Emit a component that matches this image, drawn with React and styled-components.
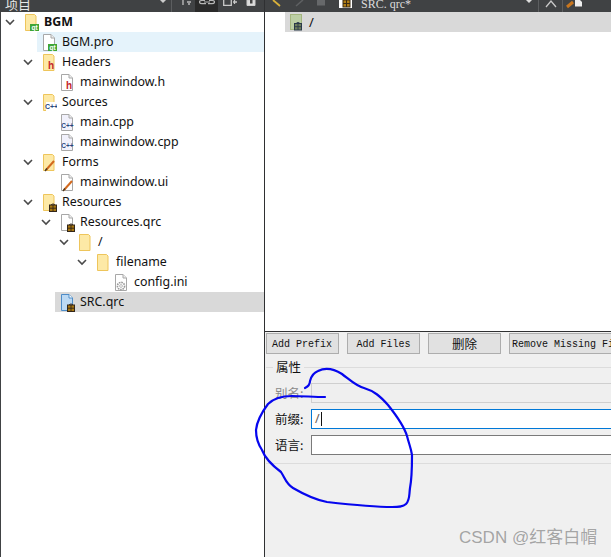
import React from "react";
import styled, { createGlobalStyle } from "styled-components";

const Global = createGlobalStyle`
  html, body { margin: 0; padding: 0; background: #f0f0f0; }
  body { font-family: "Noto Sans", "Noto Sans CJK SC", sans-serif; }
  #root { width: 611px; height: 557px; overflow: hidden; }
`;

const Page = styled.div`
  position: relative;
  width: 611px;
  height: 557px;
  overflow: hidden;
  display: flex;
  flex-direction: column;
`;

const TopBar = styled.div`
  height: 12px;
  flex: none;
  display: flex;
  align-items: flex-end;
  background: #404244;
  overflow: hidden;
  color: #e6e6e6;
`;

const TopText = styled.span`
  font: 13px/16px "Noto Sans CJK SC", sans-serif;
  margin-left: 5px;
  white-space: nowrap;
  flex: none;
`;

const TabTitle = styled.span`
  font: 12px/16px "Liberation Serif", serif;
  color: #dcdcdc;
  margin-left: 9px;
  white-space: nowrap;
  flex: none;
`;

const TopRight = styled.div`
  margin-left: auto;
  padding-right: 29px;
  display: flex;
  flex: none;
`;

const TopSlot = styled.div`
  width: ${(p) => p.$w}px;
  margin-left: ${(p) => p.$left || 0}px;
  height: 12px;
  flex: none;
  background: ${(p) => p.$bg || "transparent"};
  display: flex;
  justify-content: center;
`;

const Main = styled.div`
  flex: 1;
  display: flex;
  min-height: 0;
`;

const Sidebar = styled.div`
  width: 263px;
  flex: none;
  background: #fff;
  border-left: 1px solid #404244;
  border-right: 1px solid #2f3032;
  display: flex;
  flex-direction: column;
`;

const Row = styled.div`
  height: 20px;
  display: flex;
  align-items: center;
  padding-left: ${(p) => p.$depth * 18}px;
  margin-left: -1px;
  font-size: 12.4px;
  color: #111;
  font-weight: ${(p) => (p.$bold ? 700 : 400)};
`;

const Chevron = styled.div`
  width: 20px;
  flex: none;
  height: 20px;
  display: flex;
  align-items: center;
  padding-left: 5px;
  box-sizing: border-box;
`;

const RowBody = styled.div`
  flex: 1;
  height: 20px;
  display: flex;
  align-items: center;
  gap: 7px;
  margin-left: -1px;
  padding-left: 5px;
  background: ${(p) => p.$bg || "transparent"};
`;

const RowLabel = styled.span`
  padding-bottom: 2px;
`;

const Right = styled.div`
  flex: 1;
  min-width: 0;
  display: flex;
  flex-direction: column;
`;

const ResourcePane = styled.div`
  height: 319px;
  flex: none;
  background: #fff;
  border-bottom: 1px solid #2f3032;
  padding-left: 20px;
`;

const PrefixRow = styled.div`
  height: 20px;
  background: #d9d9d9;
  display: flex;
  align-items: center;
  padding-left: 5px;
  gap: 6px;
  font: 13px "Noto Sans", sans-serif;
  color: #111;
`;

const Editor = styled.div`
  flex: 1;
  background: #f0f0f0;
  padding: 1px 0 0 1px;
  overflow: hidden;
`;

const ButtonRow = styled.div`
  display: flex;
  gap: 8px;
  height: 21px;
  width: 400px;
`;

const ActionButton = styled.div`
  width: ${(p) => p.$w || 73}px;
  height: 21px;
  flex: none;
  box-sizing: border-box;
  background: #e1e1e1;
  border: 1px solid #adadad;
  display: flex;
  align-items: center;
  padding-top: 2px;
  padding-left: ${(p) => p.$pad ?? 0}px;
  justify-content: ${(p) => (p.$pad != null ? "flex-start" : "center")};
  font: 10px/17px "Liberation Mono", "Noto Sans CJK SC", monospace;
  color: #111;
  white-space: nowrap;
  overflow: hidden;
`;

const CjkButton = styled(ActionButton)`
  padding-top: 0;
  font: 12.5px/19px "Noto Sans CJK SC", sans-serif;
`;

const Group = styled.div`
  margin-top: 4px;
  border-bottom: 1px solid #dcdcdc;
  padding-bottom: 8px;
`;

const GroupTitle = styled.div`
  height: 18px;
  display: flex;
  align-items: center;
  gap: 3px;
  font: 12.5px/18px "Noto Sans CJK SC", sans-serif;
  color: #111;
  &::before { content: ""; width: 7px; height: 1px; background: #dcdcdc; }
  &::after { content: ""; flex: 1; height: 1px; background: #dcdcdc; }
`;

const Form = styled.div`
  display: grid;
  grid-template-columns: 36px 320px;
  grid-auto-rows: 20px;
  row-gap: 6px;
  padding: 7px 0 0 9px;
  align-items: center;
`;

const Label = styled.div`
  font: 12.5px/20px "Noto Sans CJK SC", sans-serif;
  color: ${(p) => (p.$disabled ? "#8a8a8a" : "#111")};
`;

const Field = styled.div`
  height: 20px;
  box-sizing: border-box;
  background: ${(p) => (p.$disabled ? "#efefef" : "#fff")};
  border: 1px solid ${(p) => p.$border};
  display: flex;
  align-items: center;
  padding-left: 3px;
  font: 12.5px/18px "Noto Sans", sans-serif;
  color: #6a5a50;
`;

const Caret = styled.span`
  width: 1px;
  height: 14px;
  background: #111;
  margin-left: 1px;
`;

const Overlay = styled.svg`
  position: absolute;
  left: 0;
  top: 0;
  width: 611px;
  height: 557px;
  pointer-events: none;
`;

const Watermark = styled.div`
  position: absolute;
  left: 459px;
  top: 527px;
  font: 17px/22px "Liberation Sans", "Noto Sans CJK SC", sans-serif;
  color: rgba(120, 120, 120, 0.65);
  white-space: nowrap;
`;

const Arrow = () => (
  <svg width="10" height="7" viewBox="0 0 10 7">
    <path d="M1 1 L5 5 L9 1" fill="none" stroke="#4a4a4a" strokeWidth="1.6" />
  </svg>
);

const Lock = ({ x = 7, y = 9.5, c = "#a8770f", d = "#33261a" }) => (
  <g transform={`translate(${x} ${y})`}>
    <path d="M2 1.5 Q4 -0.8 6 1.5" fill="none" stroke={d} strokeWidth="1" />
    <rect x="0.5" y="1.5" width="7" height="6.5" fill={c} stroke={d} strokeWidth="1" />
    <path d="M0.5 4.7 H7.5 M4 1.5 V8" stroke={d} strokeWidth="0.9" />
  </g>
);

const Badge = ({ kind }) => {
  if (kind === "qt")
    return (
      <g>
        <rect x="6" y="10" width="9" height="7" fill="#3fa535" />
        <text x="10.5" y="15.8" fontSize="6.5" fontWeight="700" textAnchor="middle" fill="#fff" fontFamily="Liberation Sans">qt</text>
      </g>
    );
  if (kind === "h")
    return <text x="9" y="15" fontSize="10" fontWeight="700" textAnchor="middle" fill="#c4262e" fontFamily="Liberation Sans">h</text>;
  if (kind === "cpp")
    return <text x="7.5" y="13.5" fontSize="6.5" fontWeight="700" textAnchor="middle" fill="#27477e" fontFamily="Liberation Sans">C++</text>;
  if (kind === "cppf")
    return (
      <g>
        <rect x="4" y="8" width="11" height="9" fill="#fff" />
        <text x="9.5" y="15" fontSize="7" fontWeight="700" textAnchor="middle" fill="#27477e" fontFamily="Liberation Sans">C++</text>
      </g>
    );
  if (kind === "ui")
    return (
      <g>
        <path d="M4 16 L12 7" stroke="#d2691e" strokeWidth="2" />
        <path d="M3 17 L5 14.5" stroke="#4b3a22" strokeWidth="1.4" />
      </g>
    );
  if (kind === "lock") return <Lock />;
  if (kind === "gear")
    return (
      <g>
        <circle cx="7" cy="12" r="3.6" fill="none" stroke="#9a9a9a" strokeWidth="1.6" strokeDasharray="1.6 0.8" />
        <circle cx="7" cy="12" r="1.4" fill="#fff" stroke="#aaa" strokeWidth="0.8" />
      </g>
    );
  return null;
};

const Icon = ({ type, badge }) => {
  let body;
  if (type === "folder")
    body = <path d="M1.5 1.5 H10.5 L12 3 V17.5 H1.5 Z" fill="#fde9a6" stroke="#eec55b" />;
  else if (type === "blue")
    body = (
      <>
        <path d="M1.5 1.5 H9 L12.5 5 V17.5 H1.5 Z" fill="#bcd9f3" stroke="#4d8cc8" />
        <path d="M9 1.5 V5 H12.5" fill="#fff" stroke="#4d8cc8" />
      </>
    );
  else
    body = (
      <>
        <path d="M1.5 1.5 H9 L12.5 5 V17.5 H1.5 Z" fill={badge === "cpp" ? "#f1f1fb" : "#fff"} stroke="#a8a8a8" />
        <path d="M9 1.5 V5 H12.5" fill="#eee" stroke="#a8a8a8" />
      </>
    );
  return (
    <svg width="15" height="19" viewBox="0 0 15 19" style={{ flex: "none", marginRight: -2 }}>
      {body}
      <g transform="translate(0 1)"><Badge kind={badge} /></g>
    </svg>
  );
};

const tree = [
  { d: 0, open: 1, type: "folder", badge: "qt", name: "BGM", bold: 1 },
  { d: 1, type: "file", badge: "qt", name: "BGM.pro", bg: "#e5f3fb" },
  { d: 1, open: 1, type: "folder", badge: "h", name: "Headers" },
  { d: 2, type: "file", badge: "h", name: "mainwindow.h" },
  { d: 1, open: 1, type: "folder", badge: "cppf", name: "Sources" },
  { d: 2, type: "file", badge: "cpp", name: "main.cpp" },
  { d: 2, type: "file", badge: "cpp", name: "mainwindow.cpp" },
  { d: 1, open: 1, type: "folder", badge: "ui", name: "Forms" },
  { d: 2, type: "file", badge: "ui", name: "mainwindow.ui" },
  { d: 1, open: 1, type: "folder", badge: "lock", name: "Resources" },
  { d: 2, open: 1, type: "file", badge: "lock", name: "Resources.qrc" },
  { d: 3, open: 1, type: "folder", name: "/" },
  { d: 4, open: 1, type: "folder", name: "filename" },
  { d: 5, type: "file", badge: "gear", name: "config.ini" },
  { d: 2, type: "blue", badge: "lock", name: "SRC.qrc", bg: "#d9d9d9" },
];

export default function App() {
  return (
    <Page>
      <Global />
      <TopBar>
        <TopText>项目</TopText>
        <TopSlot $w={10} $left={127}>
          <svg width="10" height="12"><path d="M2 0 L8 0 L5 3 Z" fill="#ccc" /></svg>
        </TopSlot>
        <TopSlot $w={1} $left={3} $bg="#5c5e60" />
        <TopSlot $w={12} $left={8}>
          <svg width="12" height="12"><path d="M3 0 V5 M7 2 H11 M8 4 H10" fill="none" stroke="#b8b8b8" strokeWidth="1.4" /></svg>
        </TopSlot>
        <TopSlot $w={23} $left={3} $bg="#2a2a2a">
          <svg width="16" height="12"><path d="M6 0.5 H3 Q0.5 0.5 0.5 2 Q0.5 3.7 3 3.7 H7 M10 0.5 H13 Q15.5 0.5 15.5 2 Q15.5 3.7 13 3.7 H9 M5 2 H11" fill="none" stroke="#b5b5b5" strokeWidth="1.2" /></svg>
        </TopSlot>
        <TopSlot $w={14} $left={5}>
          <svg width="14" height="12"><path d="M0.7 0 V5.3 H8.3 V0 M11.5 0 V4 M10 2 H14" fill="none" stroke="#c8c8c8" strokeWidth="1.3" /></svg>
        </TopSlot>
        <TopSlot $w={10} $left={9}>
          <svg width="10" height="12"><path d="M1 0 V5.5 H9 V0 Z" fill="#dcdcdc" stroke="#ccc" /><rect x="4" y="0" width="2.5" height="3.5" fill="#444" /></svg>
        </TopSlot>
        <TopSlot $w={1} $left={8} $bg="#2f3032" />
        <TopSlot $w={12} $left={7}>
          <svg width="12" height="12"><path d="M1 0 L8 6" stroke="#d9b13a" strokeWidth="1.8" /></svg>
        </TopSlot>
        <TopSlot $w={12} $left={11}>
          <svg width="12" height="12"><path d="M8 0 L1 6" stroke="#5e6062" strokeWidth="1.6" /></svg>
        </TopSlot>
        <TopSlot $w={8} $left={10}>
          <svg width="8" height="12"><rect x="0" y="0" width="8" height="5.5" fill="#66686a" /></svg>
        </TopSlot>
        <TopSlot $w={13} $left={14}>
          <svg width="13" height="12"><rect x="0" y="0" width="13" height="8" fill="#fff" /><rect x="4" y="0" width="7" height="7" fill="#b07d14" stroke="#3a2b12" /><path d="M4 3.5 H11 M7.5 0 V7" stroke="#3a2b12" /></svg>
        </TopSlot>
        <TabTitle>SRC. qrc*</TabTitle>
        <TopRight>
          <TopSlot $w={10}>
            <svg width="10" height="12"><path d="M2 0 L8 0 L5 3 Z" fill="#ddd" /></svg>
          </TopSlot>
          <TopSlot $w={1} $left={4} $bg="#5c5e60" />
          <TopSlot $w={12} $left={6}>
            <svg width="12" height="12"><path d="M1 7 L6 1 L11 7" fill="none" stroke="#c8c8c8" strokeWidth="1.3" /></svg>
          </TopSlot>
          <TopSlot $w={1} $left={5} $bg="#5c5e60" />
          <TopSlot $w={16} $left={3}>
            <svg width="17" height="12"><path d="M1 7 L7 2" stroke="#c9761e" strokeWidth="3" /><path d="M9 0 H14 L16 2 V6.5 H9 Z" fill="#eee" /></svg>
          </TopSlot>
        </TopRight>
      </TopBar>
      <Main>
        <Sidebar>
          {tree.map((n) => (
            <Row key={n.name} $depth={n.d} $bold={n.bold}>
              <Chevron>{n.open ? <Arrow /> : null}</Chevron>
              <RowBody $bg={n.bg}>
                <Icon type={n.type} badge={n.badge} />
                <RowLabel>{n.name}</RowLabel>
              </RowBody>
            </Row>
          ))}
        </Sidebar>
        <Right>
          <ResourcePane>
            <PrefixRow>
              <svg width="13" height="17" viewBox="0 0 13 17">
                <rect x="0.5" y="0.5" width="11" height="15" fill="#bccfa4" stroke="#a4b67f" />
                <Lock x={4} y={8} c="#6f7f5c" d="#2a3a4a" />
              </svg>
              <span>/</span>
            </PrefixRow>
          </ResourcePane>
          <Editor>
            <ButtonRow>
              <ActionButton $pad={5}>Add Prefix</ActionButton>
              <ActionButton>Add Files</ActionButton>
              <CjkButton>删除</CjkButton>
              <ActionButton $w={130} $pad={2}>Remove Missing Files</ActionButton>
            </ButtonRow>
            <Group>
              <GroupTitle>属性</GroupTitle>
              <Form>
                <Label $disabled>别名:</Label>
                <Field $disabled $border="#cfcfcf" />
                <Label>前缀:</Label>
                <Field $border="#0078d7">/<Caret /></Field>
                <Label>语言:</Label>
                <Field $border="#7a7a7a" />
              </Form>
            </Group>
          </Editor>
        </Right>
      </Main>
      <Overlay viewBox="0 0 611 557">
        <path
          d="M305 388 C309 386 310 384 310 381 C311 377 313 373 318 371 C326 367 334 369 342 374 C350 380 356 386 364 388 C374 391 380 396 388 405 C396 415 404 426 407 436 C409 444 411 448 412 455 C412 465 412 478 410 488 C409 495 410 500 406 504 C403 507 398 507 392 507 C372 507 345 504 327 502 C316 500 305 495 293 488 C286 484 285 478 281 472 C273 466 265 458 262 450 C258 444 256 436 256 430 C257 420 262 412 268 404 C274 398 282 396 292 396 C303 396 314 397 325 397"
          fill="none"
          stroke="#0606ee"
          strokeWidth="2.2"
          strokeLinecap="round"
        />
      </Overlay>
      <Watermark>CSDN @红客白帽</Watermark>
    </Page>
  );
}
